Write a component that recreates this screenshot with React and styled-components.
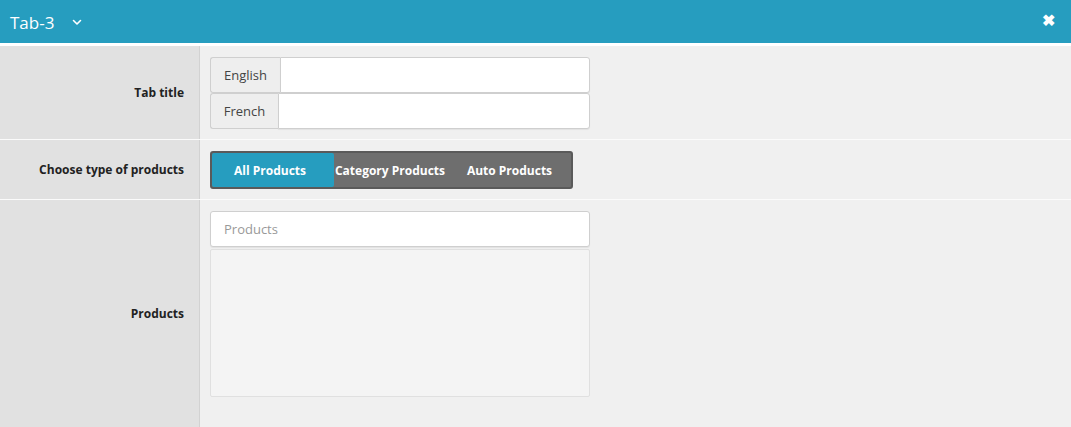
import styled, { createGlobalStyle } from "styled-components";

const Global = createGlobalStyle`
    html, body {
        margin: 0;
        padding: 0;
        background: #f0f0f0;
        font-family: "Open Sans", "Liberation Sans", sans-serif;
    }
    * { box-sizing: border-box; }
`

const Panel = styled.div`
    width: 1071px;
    height: 427px;
    overflow: hidden;
    background: #f0f0f0;
`

const Header = styled.div`
    height: 46px;
    background: #269dbf;
    border-bottom: 3px solid #ffffff;
    display: flex;
    align-items: center;
    justify-content: space-between;
    padding: 0 16px 0 10px;
    color: #fff;
`

const Title = styled.div`
    display: flex;
    align-items: center;
    gap: 18px;
    font-size: 17px;
    line-height: 20px;
    padding-top: 2px;
`

const Close = styled.span`
    font-size: 16px;
    font-weight: 700;
    line-height: 16px;
    padding-bottom: 3px;
`

const Row = styled.div`
    display: grid;
    grid-template-columns: 200px 1fr;
    height: ${p => p.$h}px;
    border-bottom: ${p => (p.$last ? "none" : "1px solid #fbfbfb")};
`

const Label = styled.div`
    background: #e1e1e1;
    border-right: 1px solid #d2d2d2;
    display: flex;
    align-items: center;
    justify-content: flex-end;
    padding-right: 15px;
    font-size: 12px;
    font-weight: 700;
    color: #222;
`

const Content = styled.div`
    padding: ${p => (p.$center ? "10px" : "11px 10px 10px")};
    display: flex;
    flex-direction: column;
    justify-content: ${p => (p.$center ? "center" : "flex-start")};
`

const Group = styled.div`
    display: flex;
    width: 380px;
    height: 36px;
`

const Addon = styled.div`
    width: ${p => p.$w}px;
    background: #eeeeee;
    border: 1px solid #cfcfcf;
    border-right: none;
    border-radius: 3px 0 0 3px;
    display: flex;
    align-items: center;
    justify-content: center;
    font-size: 13px;
    color: #444;
`

const Input = styled.input`
    flex: 1;
    min-width: 0;
    height: 100%;
    border: 1px solid #cfcfcf;
    border-radius: ${p => (p.$alone ? "3px" : "0 3px 3px 0")};
    background: #fff;
    padding: 0 13px;
    font-family: inherit;
    font-size: 13px;
    color: #555;
    outline: none;
    box-shadow: 0 1px 1px rgba(0, 0, 0, 0.06);
    &::placeholder { color: #999; }
`

const Switch = styled.div`
    display: flex;
    width: 363px;
    height: 38px;
    background: #6e6e6e;
    border: 2px solid #5a5a5a;
    border-radius: 3px;
    margin-top: 1px;
`

const Option = styled.div`
    width: ${p => p.$w}px;
    display: flex;
    align-items: center;
    justify-content: center;
    font-size: 12px;
    font-weight: 700;
    color: #fff;
    background: ${p => (p.$active ? "#269dbf" : "transparent")};
    border-radius: ${p => (p.$active ? "2px" : "0")};
    padding-left: ${p => p.$pl || 0}px;
    padding-right: ${p => p.$pr || 0}px;
`

const ProductField = styled.div`
    width: 380px;
    display: flex;
    flex-direction: column;
    gap: 2px;
`

const ProductInput = styled.div`
    height: 36px;
    display: flex;
`

const ProductList = styled.div`
    height: 148px;
    background: #f4f4f4;
    border: 1px solid #e0e0e0;
    border-radius: 2px;
`

const ChevronDown = () => (
    <svg width="10" height="7" viewBox="0 0 10 7" fill="none">
        <path d="M1.5 1.5 L5 5 L8.5 1.5" stroke="#fff" strokeWidth="1.6" strokeLinecap="round" strokeLinejoin="round" />
    </svg>
)

const App = () => {
    return (
        <Panel>
            <Global />
            <Header>
                <Title>
                    Tab-3
                    <ChevronDown />
                </Title>
                <Close>✖</Close>
            </Header>
            <Row $h={94}>
                <Label>Tab title</Label>
                <Content>
                    <Group>
                        <Addon $w={70}>English</Addon>
                        <Input />
                    </Group>
                    <Group>
                        <Addon $w={68}>French</Addon>
                        <Input />
                    </Group>
                </Content>
            </Row>
            <Row $h={60}>
                <Label>Choose type of products</Label>
                <Content $center>
                    <Switch>
                        <Option $w={122} $pr={6} $active>All Products</Option>
                        <Option $w={112}>Category Products</Option>
                        <Option $w={125} $pl={2}>Auto Products</Option>
                    </Switch>
                </Content>
            </Row>
            <Row $h={227} $last>
                <Label>Products</Label>
                <Content>
                    <ProductField>
                        <ProductInput>
                            <Input $alone placeholder="Products" />
                        </ProductInput>
                        <ProductList />
                    </ProductField>
                </Content>
            </Row>
        </Panel>
    )
}

export default App;
